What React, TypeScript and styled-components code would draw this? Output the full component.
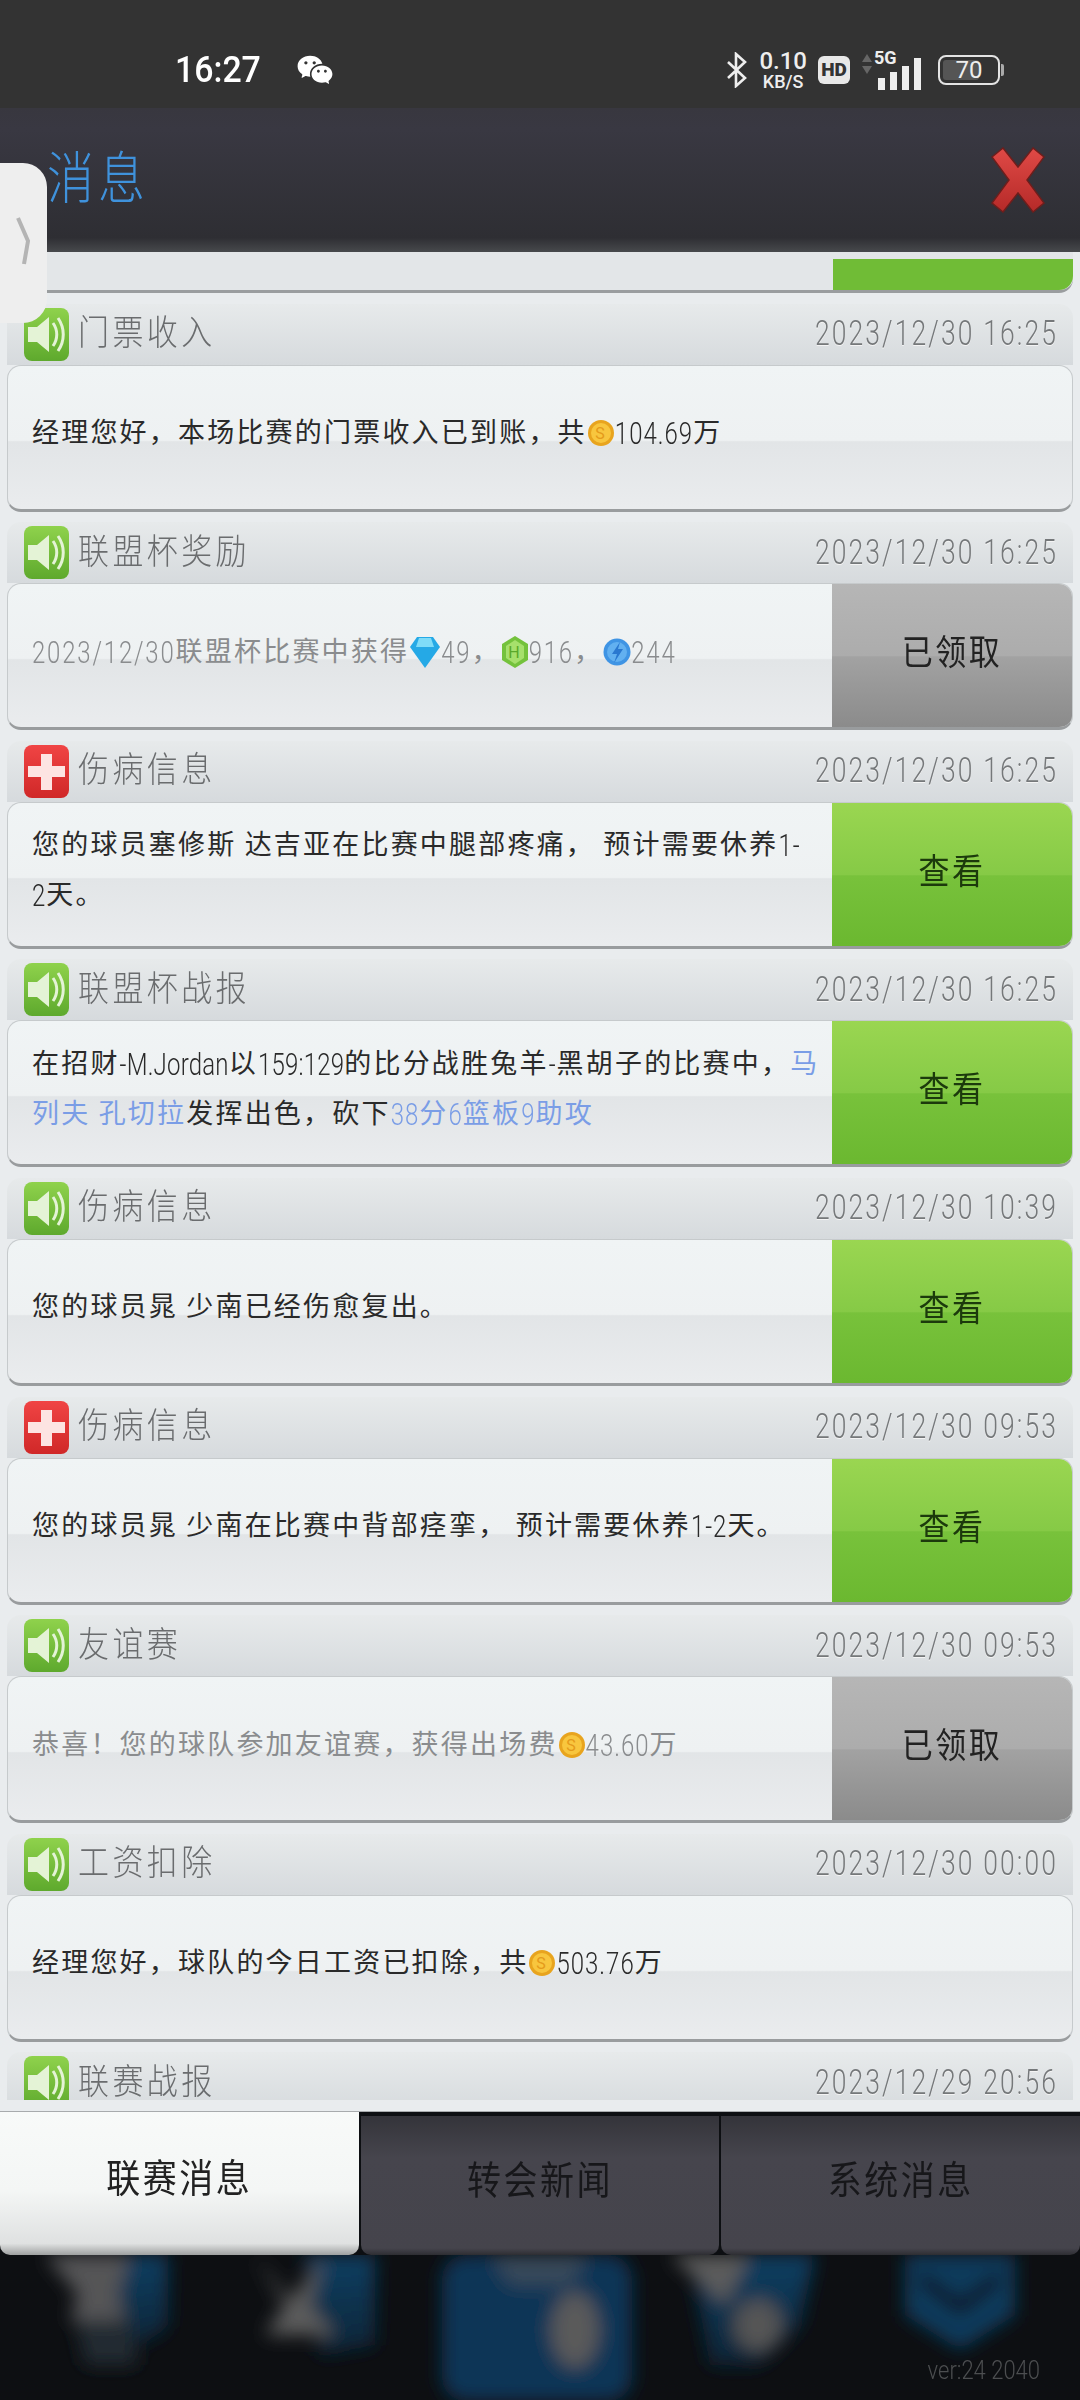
import React from "react";
import styled, {createGlobalStyle} from "styled-components";
import {RiWechatFill} from "react-icons/ri";

const GlobalStyle = createGlobalStyle`
    html, body {
        margin: 0;
        padding: 0;
        background: #0d0f12;
    }
    * {
        box-sizing: border-box;
    }
`

const CJK = `"Noto Sans CJK SC", "Noto Sans", sans-serif`
const LATIN = `Roboto, "Noto Sans CJK SC", sans-serif`

const Coin = () => (
    <InlineIcon width="28" height="34" viewBox="0 0 28 34">
        <circle cx="14" cy="17" r="13" fill="#e8a41e"/>
        <circle cx="14" cy="17" r="10" fill="#f8c63e"/>
        <text x="14" y="23" fontSize="16" fontFamily="Roboto" fill="#e59a1a" textAnchor="middle">S</text>
    </InlineIcon>
)

const Gem = () => (
    <InlineIcon width="32" height="34" viewBox="0 0 32 34">
        <path d="M8 2H24L31 12L16 33L1 12Z" fill="#25a9e6"/>
        <path d="M10 3H22L25 12H7Z" fill="#7fdcf8"/>
    </InlineIcon>
)

const Hex = () => (
    <InlineIcon width="28" height="34" viewBox="0 0 28 34">
        <path d="M14 1L27 9V25L14 33L1 25V9Z" fill="#74c23c"/>
        <path d="M14 5L23 11V23L14 29L5 23V11Z" fill="#a6e06c"/>
        <text x="14" y="23" fontSize="16" fontFamily="Roboto" fill="#5aa82a" textAnchor="middle">H</text>
    </InlineIcon>
)

const Bolt = () => (
    <InlineIcon width="28" height="34" viewBox="0 0 28 34">
        <circle cx="14" cy="17" r="13.5" fill="#3f94e4"/>
        <circle cx="14" cy="17" r="10" fill="#62b0f0"/>
        <path d="M17 7L9 19H14L11 28L20 14H15Z" fill="#2a78d0"/>
    </InlineIcon>
)

const SpeakerIcon = () => (
    <BadgeSvg viewBox="0 0 45 53">
        <defs>
            <linearGradient id="greenBadge" x1="0" y1="0" x2="0" y2="1">
                <stop offset="0" stopColor="#8fd24c"/>
                <stop offset="1" stopColor="#5ea92d"/>
            </linearGradient>
        </defs>
        <rect width="45" height="53" rx="8" fill="url(#greenBadge)"/>
        <path d="M4 19H13L25 9V44L13 34H4Z" fill="#e4f3d6"/>
        <path d="M29 15C34 22 34 31 29 38" fill="none" stroke="#e4f3d6" strokeWidth="3"/>
        <path d="M34 10C41 20 41 33 34 43" fill="none" stroke="#e4f3d6" strokeWidth="3"/>
    </BadgeSvg>
)

const CrossIcon = () => (
    <BadgeSvg viewBox="0 0 45 53">
        <defs>
            <linearGradient id="redBadge" x1="0" y1="0" x2="0" y2="1">
                <stop offset="0" stopColor="#f04444"/>
                <stop offset="1" stopColor="#d02828"/>
            </linearGradient>
        </defs>
        <rect width="45" height="53" rx="8" fill="url(#redBadge)"/>
        <path d="M17 9H28V21H41V32H28V45H17V32H4V21H17Z" fill="#fde4e2"/>
    </BadgeSvg>
)

type Row = {
    title: string
    date: string
    icon: 'speaker' | 'cross'
    action?: 'view' | 'claimed'
    body: React.ReactNode
}

const getRows = (): Row[] => [
    {
        title: '门票收入', date: '2023/12/30 16:25', icon: 'speaker',
        body: <>经理您好，本场比赛的门票收入已到账，共<Coin/><Num>104.69</Num>万</>,
    },
    {
        title: '联盟杯奖励', date: '2023/12/30 16:25', icon: 'speaker', action: 'claimed',
        body: <><Num $track={1.8}>2023/12/30</Num>联盟杯比赛中获得<Gem/><Num $track={1.8}>49</Num>，<Hex/><Num $track={1.8}>916</Num>，<Bolt/><Num $track={1.8}>244</Num></>,
    },
    {
        title: '伤病信息', date: '2023/12/30 16:25', icon: 'cross', action: 'view',
        body: <>您的球员塞修斯 达吉亚在比赛中腿部疼痛， 预计需要休养<Num>1-</Num><br/><Num>2</Num>天。</>,
    },
    {
        title: '联盟杯战报', date: '2023/12/30 16:25', icon: 'speaker', action: 'view',
        body: <>在招财<Num $track={0.2}>-M.Jordan</Num>以<Num $track={0.2}>159:129</Num>的比分战胜兔羊<Num>-</Num>黑胡子的比赛中，<Link>马</Link><br/><Link>列夫 孔切拉</Link>发挥出色，砍下<Link><Num>38</Num>分<Num>6</Num>篮板<Num>9</Num>助攻</Link></>,
    },
    {
        title: '伤病信息', date: '2023/12/30 10:39', icon: 'speaker', action: 'view',
        body: <>您的球员晁 少南已经伤愈复出。</>,
    },
    {
        title: '伤病信息', date: '2023/12/30 09:53', icon: 'cross', action: 'view',
        body: <>您的球员晁 少南在比赛中背部痉挛， 预计需要休养<Num>1-2</Num>天。</>,
    },
    {
        title: '友谊赛', date: '2023/12/30 09:53', icon: 'speaker', action: 'claimed',
        body: <>恭喜！您的球队参加友谊赛，获得出场费<Coin/><Num>43.60</Num>万</>,
    },
    {
        title: '工资扣除', date: '2023/12/30 00:00', icon: 'speaker',
        body: <>经理您好，球队的今日工资已扣除，共<Coin/><Num>503.76</Num>万</>,
    },
    {
        title: '联赛战报', date: '2023/12/29 20:56', icon: 'speaker',
        body: null,
    },
]

const App: React.FC = () => {
    const rows = getRows()
    return (
        <Page>
            <GlobalStyle/>
            <StatusBar>
                <StatusLeft>
                    <Clock>16:27</Clock>
                    <RiWechatFill size={38} color="#fff"/>
                </StatusLeft>
                <StatusRight>
                    <svg width="22" height="36" viewBox="0 0 22 36" fill="none" stroke="#eee" strokeWidth="2.6">
                        <path d="M2 10L19 26L10 34V2L19 10L2 26"/>
                    </svg>
                    <Speed>
                        <SpeedValue>0.10</SpeedValue>
                        <SpeedUnit>KB/S</SpeedUnit>
                    </Speed>
                    <HdBadge>HD</HdBadge>
                    <Signal>
                        <svg width="12" height="24" viewBox="0 0 12 24" fill="#666">
                            <path d="M6 2L11 10H1Z"/>
                            <path d="M6 22L11 14H1Z"/>
                        </svg>
                        <FiveG>5G</FiveG>
                        <svg width="44" height="32" viewBox="0 0 44 32" fill="#eee">
                            <rect x="1" y="20" width="7" height="12"/>
                            <rect x="13" y="14" width="7" height="18"/>
                            <rect x="25" y="8" width="7" height="24"/>
                            <rect x="37" y="0" width="7" height="32"/>
                        </svg>
                    </Signal>
                    <Battery>
                        <BatteryShell>
                            <BatteryFill style={{width: '70%'}}/>
                            <BatteryText>70</BatteryText>
                        </BatteryShell>
                        <BatteryNub/>
                    </Battery>
                </StatusRight>
            </StatusBar>
            <Header>
                <HeaderTitle>消息</HeaderTitle>
                <svg width="58" height="66" viewBox="0 0 58 66">
                    <defs>
                        <linearGradient id="closeRed" x1="0" y1="0" x2="0" y2="1">
                            <stop offset="0" stopColor="#e04a46"/>
                            <stop offset="1" stopColor="#b52a28"/>
                        </linearGradient>
                    </defs>
                    <path d="M3 10L14 1L29 20L44 1L55 10L38 33L55 56L44 65L29 46L14 65L3 56L20 33Z" fill="url(#closeRed)" stroke="#6d1e1c" strokeWidth="1.5"/>
                </svg>
            </Header>
            <SideHandle>
                <svg width="16" height="50" viewBox="0 0 16 50" fill="none" stroke="#b4b4b4" strokeWidth="4">
                    <path d="M3 2L13 25L9 48"/>
                </svg>
            </SideHandle>
            <ListFrame>
                <List>
                    <ClippedBody>
                        <ClippedAction/>
                    </ClippedBody>
                    {rows.map((row, i) => (
                        <Item key={i}>
                            <ItemHead>
                                {row.icon === 'cross' ? <CrossIcon/> : <SpeakerIcon/>}
                                <ItemTitle>{row.title}</ItemTitle>
                                <ItemDate>{row.date}</ItemDate>
                            </ItemHead>
                            <ItemBody>
                                <Message $muted={row.action === 'claimed'}>{row.body}</Message>
                                {row.action && (
                                    <Action $kind={row.action}>
                                        <ActionLabel $kind={row.action}>{row.action === 'view' ? '查看' : '已领取'}</ActionLabel>
                                    </Action>
                                )}
                            </ItemBody>
                        </Item>
                    ))}
                </List>
            </ListFrame>
            <Tabs>
                <Tab $active>
                    <TabLabel>联赛消息</TabLabel>
                </Tab>
                <Tab>
                    <TabLabel>转会新闻</TabLabel>
                </Tab>
                <Tab>
                    <TabLabel>系统消息</TabLabel>
                </Tab>
            </Tabs>
            <Backdrop>
                <svg width="1080" height="146" viewBox="0 0 1080 146">
                    <defs>
                        <filter id="soft"><feGaussianBlur stdDeviation="9"/></filter>
                        <linearGradient id="fadeBlue" x1="0" y1="0" x2="0" y2="1">
                            <stop offset="0" stopColor="#0c3f63"/>
                            <stop offset="1" stopColor="#0a2436"/>
                        </linearGradient>
                    </defs>
                    <g filter="url(#soft)">
                        <path d="M105 0H168V70Q145 95 105 90Z" fill="url(#fadeBlue)"/>
                        <path d="M45 0H130L118 40L125 65H70L78 40Z" fill="#555557"/>
                        <path d="M75 65H130L138 110H85Z" fill="#222a30"/>
                        <path d="M305 0H375V90L320 100Z" fill="url(#fadeBlue)"/>
                        <path d="M255 0L290 45L325 0L310 50L335 80H265L285 50Z" fill="#5c5c5c"/>
                        <rect x="442" y="0" width="190" height="146" rx="24" fill="#0a3556"/>
                        <path d="M490 0H590L570 30H510Z" fill="#38495a"/>
                        <ellipse cx="575" cy="75" rx="24" ry="38" fill="#5a5a5a"/>
                        <path d="M690 0H815L800 70L760 110H710Z" fill="url(#fadeBlue)"/>
                        <path d="M670 0H750L725 50Z" fill="#5c5c5c"/>
                        <ellipse cx="758" cy="70" rx="24" ry="26" fill="#555"/>
                        <path d="M905 0H1015V60L960 95L905 60Z" fill="#0c3a5c"/>
                        <path d="M920 15L960 45L1000 15V30L960 60L920 30Z" fill="#0d0f12"/>
                    </g>
                </svg>
                <Version>ver:24 2040</Version>
            </Backdrop>
        </Page>
    )
}

export default App

const Page = styled.div`
    position: relative;
    width: 1080px;
    height: 2400px;
    overflow: hidden;
    display: flex;
    flex-direction: column;
    background: #0d0f12;
    font-family: ${CJK};
`

const StatusBar = styled.div`
    height: 108px;
    flex: none;
    display: flex;
    align-items: center;
    justify-content: space-between;
    padding: 32px 76px 0 175px;
    background: #333333;
    color: #fff;
`

const StatusLeft = styled.div`
    display: flex;
    align-items: center;
    gap: 36px;
`

const Clock = styled.span`
    font: 500 36px ${LATIN};
    transform: scaleX(0.94);
    transform-origin: left center;
    margin-right: -6px;
`

const StatusRight = styled.div`
    display: flex;
    align-items: center;
    gap: 11px;
`

const Speed = styled.div`
    display: flex;
    flex-direction: column;
    align-items: center;
    font-family: ${LATIN};
    color: #eee;
`

const SpeedValue = styled.span`
    font-size: 24px;
    line-height: 24px;
    font-weight: 500;
`

const SpeedUnit = styled.span`
    font-size: 18px;
    line-height: 18px;
    font-weight: 500;
`

const HdBadge = styled.div`
    width: 32px;
    height: 28px;
    border-radius: 6px;
    background: #e8e8e8;
    color: #333;
    font: 900 19px/28px ${LATIN};
    text-align: center;
`

const Signal = styled.div`
    position: relative;
    width: 60px;
    height: 40px;
    display: flex;
    align-items: flex-end;
    justify-content: flex-end;
    & > svg:first-child {
        position: absolute;
        left: 0;
        top: 2px;
    }
`

const FiveG = styled.span`
    position: absolute;
    left: 13px;
    top: -2px;
    font: 700 18px/20px ${LATIN};
    color: #eee;
`

const Battery = styled.div`
    display: flex;
    align-items: center;
    gap: 1px;
    margin-left: 6px;
`

const BatteryShell = styled.div`
    position: relative;
    width: 62px;
    height: 30px;
    padding: 3px;
    border: 2px solid #e4e4e4;
    border-radius: 8px;
`

const BatteryFill = styled.div`
    height: 100%;
    border-radius: 3px;
    background: #555;
`

const BatteryText = styled.span`
    position: absolute;
    inset: 0;
    text-align: center;
    font: 400 24px/26px ${LATIN};
    color: #eee;
`

const BatteryNub = styled.div`
    width: 3px;
    height: 12px;
    border-radius: 0 2px 2px 0;
    background: #aaa;
`

const Header = styled.div`
    height: 144px;
    flex: none;
    display: flex;
    align-items: center;
    justify-content: space-between;
    padding: 0 33px 0 47px;
    background: linear-gradient(#38373f 0%, #393842 15%, #2e2e33 90%, #47494c 100%);
`

const HeaderTitle = styled.h1`
    margin: 0 0 14px;
    font-size: 47px;
    font-weight: 300;
    letter-spacing: 4px;
    color: #3f92dc;
    transform: scaleY(1.18);
`

const SideHandle = styled.div`
    position: absolute;
    z-index: 2;
    left: 0;
    top: 163px;
    width: 47px;
    height: 160px;
    display: flex;
    align-items: center;
    justify-content: flex-start;
    padding: 0 0 5px 15px;
    background: #eeeeee;
    border-radius: 0 24px 24px 0;
`

const ListFrame = styled.div`
    height: 1860px;
    flex: none;
    padding-bottom: 11px;
    background: #e9ecee;
    border-bottom: 1px solid #a8abad;
`

const List = styled.div`
    height: 100%;
    overflow: hidden;
    display: flex;
    flex-direction: column;
    gap: 10.6px;
    padding: 0 7px;
`

const ClippedBody = styled.div`
    flex: none;
    height: 41px;
    display: flex;
    justify-content: flex-end;
    padding-top: 7px;
    background: #e3e6e8;
    border-bottom: 3px solid #9a9d9f;
    border-radius: 0 0 14px 14px;
`

const ClippedAction = styled.div`
    width: 240px;
    background: #70bc36;
    border-radius: 0 0 14px 0;
`

const Item = styled.div`
    flex: none;
`

const ItemHead = styled.div`
    position: relative;
    height: 61px;
    display: flex;
    align-items: center;
    padding: 0 15px 0 17px;
    background: linear-gradient(#e7eaeb, #d6dadd);
    border-radius: 14px 14px 0 0;
`

const BadgeSvg = styled.svg`
    width: 45px;
    height: 53px;
    flex: none;
`

const ItemTitle = styled.span`
    margin: 0 0 9px 9px;
    font-size: 31px;
    font-weight: 300;
    letter-spacing: 3.4px;
    color: #6a6c6e;
    transform: scaleY(1.12);
`

const ItemDate = styled.span`
    margin: 0 0 3px auto;
    font: 300 26.5px ${LATIN};
    letter-spacing: 2.1px;
    color: #75787a;
    text-shadow: 0 1px 0 #f4f4f4;
    transform: scaleY(1.3);
`

const ItemBody = styled.div`
    height: 147px;
    display: flex;
    align-items: center;
    overflow: hidden;
    background: linear-gradient(#f0f4f5 0%, #eef1f2 52%, #e2e5e7 53%, #eaecee 100%);
    border: 1px solid #c6cacc;
    border-bottom: 3px solid #999c9e;
    border-radius: 14px;
`

const Message = styled.p<{$muted?: boolean}>`
    flex: 1;
    margin: 0 0 12px;
    padding-left: 24px;
    font-size: 27px;
    font-weight: 400;
    line-height: 50px;
    letter-spacing: 2.2px;
    white-space: nowrap;
    color: ${(props) => props.$muted ? '#8a8c8e' : '#2a2a2a'};
`

const Num = styled.span<{$track?: number}>`
    display: inline-block;
    font: 300 24px/1 ${LATIN};
    letter-spacing: ${(props) => props.$track ?? 1}px;
    transform: scaleY(1.3);
`

const Link = styled.span`
    color: #7a9de6;
`

const InlineIcon = styled.svg`
    vertical-align: -8px;
`

const Action = styled.div<{$kind: 'view' | 'claimed'}>`
    width: 240px;
    height: 100%;
    flex: none;
    display: flex;
    align-items: center;
    justify-content: center;
    padding-bottom: 12px;
    background: ${(props) => props.$kind === 'view'
        ? 'linear-gradient(#9ad651 0%, #86ca46 50%, #78c23b 51%, #6bb830 100%)'
        : 'linear-gradient(#b6b6b6 0%, #acacac 50%, #a2a2a2 51%, #8b8b8b 100%)'};
`

const ActionLabel = styled.span<{$kind: 'view' | 'claimed'}>`
    font-size: 31px;
    font-weight: 400;
    letter-spacing: 2.5px;
    color: ${(props) => props.$kind === 'view' ? '#1c3a0c' : '#222'};
    transform: scaleY(1.15);
`

const Tabs = styled.div`
    position: relative;
    z-index: 1;
    height: 143px;
    margin-top: 0;
    flex: none;
    display: flex;
    gap: 2px;
    align-items: flex-end;
`

const Tab = styled.div<{$active?: boolean}>`
    flex: 1;
    height: ${(props) => props.$active ? '143px' : '139px'};
    margin-top: ${(props) => props.$active ? '-2px' : '0'};
    display: flex;
    align-items: center;
    justify-content: center;
    padding-bottom: 16px;
    border-radius: 0 0 10px 10px;
    color: ${(props) => props.$active ? '#222' : '#17171a'};
    background: ${(props) => props.$active
        ? 'linear-gradient(#f8faf9 0%, #f4f6f5 55%, #dfe1e1 92%, #9fa1a1 100%)'
        : 'linear-gradient(#34343a 0%, #46454d 30%, #45444c 95%, #2e2e33 100%)'};
`

const TabLabel = styled.span`
    font-size: 34px;
    font-weight: 400;
    letter-spacing: 2.5px;
    transform: scaleY(1.14);
`

const Backdrop = styled.div`
    position: relative;
    flex: 1;
    min-height: 0;
    & > svg {
        display: block;
    }
`

const Version = styled.span`
    position: absolute;
    right: 40px;
    bottom: 18px;
    font: 300 22px ${LATIN};
    color: #4c4e50;
    transform: scaleY(1.2);
`
